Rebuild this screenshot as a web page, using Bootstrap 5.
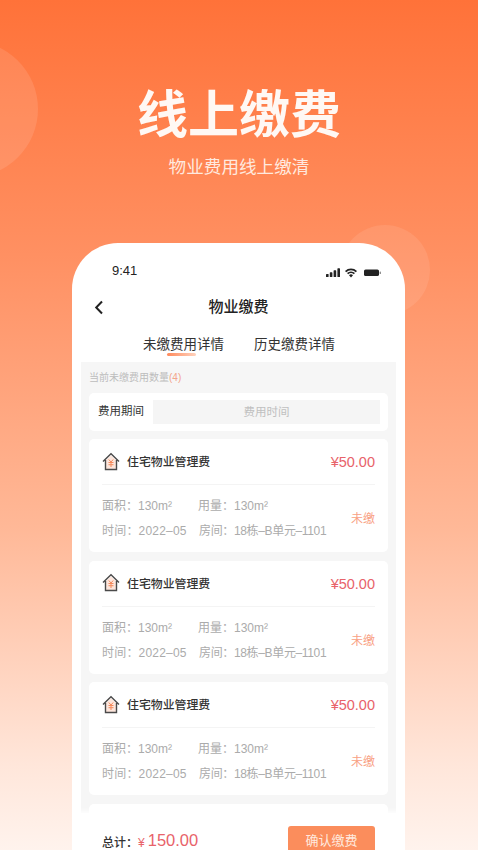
<!DOCTYPE html>
<html lang="zh-CN">
<head>
<meta charset="utf-8">
<title>线上缴费</title>
<link href="https://cdn.jsdelivr.net/npm/bootstrap@5.3.0/dist/css/bootstrap.min.css" rel="stylesheet">
<style>
html,body{margin:0;height:850px;overflow:hidden}
body{font-family:"Liberation Sans","Noto Sans CJK SC",sans-serif;background:#fff}
.stage{position:relative;height:850px;overflow:hidden;background:linear-gradient(180deg,#ff7239 0%,#ff9062 30%,#ffb897 62%,#ffe6da 90%,#fff3ed 100%);padding-top:85px}
.blob-l{position:absolute;left:-102px;top:40px;width:140px;height:138px;border-radius:50%;background:rgba(255,255,255,.11)}
.blob-r{position:absolute;left:340px;top:225px;width:90px;height:90px;border-radius:50%;background:rgba(255,255,255,.09)}
.hero-title{font-size:51px;line-height:62px;font-weight:700;color:#fff8f4;margin:0;position:relative}
.hero-sub{font-size:17.6px;line-height:24px;color:#ffe9df;margin:8px 0 0;position:relative}
.phone{position:relative;width:333px;height:607px;margin:64px 0 0 72px;background:#fff;border-radius:46px 46px 0 0;overflow:hidden}
.status{padding:20px 24px 0 40px;height:40px;color:#222}
.status-time{font-size:13px;line-height:16px;font-weight:500}
.topbar{position:relative;height:48px;padding-top:1px;font-size:15px;font-weight:500;color:#222}
.back-btn{position:absolute;left:22px;top:17px;display:block}
.tabs-row{height:31px;gap:30px;padding:4px 0 0 1px;font-size:13.5px;line-height:20px;color:#333}
.tab-on{position:relative}
.tab-on::after{content:"";position:absolute;left:24px;bottom:-1px;width:29px;height:3px;border-radius:2px;background:linear-gradient(90deg,#ff8a5c,#ffd2bd)}
.sheet{margin:0 9px;background:#f6f6f6;padding:0 8px;height:500px}
.count-line{font-size:10px;line-height:14px;color:#bdbdbd;padding:9px 0 8px 0}
.count-line em{font-style:normal;color:#f3a58c}
.panel{background:#fff;border-radius:5px}
.filter{height:38px;padding:0 8px 0 9px;margin-bottom:8px;gap:9px}
.filter-label{font-size:11.5px;color:#333;white-space:nowrap}
.filter-field{flex:1;height:24px;line-height:24px;background:#f5f5f5;text-align:center;font-size:11.5px;color:#c0c0c0}
.fee{height:113px;margin-bottom:8.5px;padding:0 13px}
.fee-head{height:46px;padding-top:3px;border-bottom:1px solid #f4f4f4;gap:7px}
.fee-icon{margin-top:-4px}
.fee-name{font-size:11.9px;color:#333;font-weight:500}
.fee-price{margin-left:auto;font-size:14.5px;color:#e8636a}
.fee-body{color:#ababab;font-size:12px;line-height:25px;padding-top:9px}
.meta-a{width:96px;white-space:nowrap}
.meta-b{width:97px;white-space:nowrap;letter-spacing:.2px}
.meta-room{white-space:nowrap;letter-spacing:-.35px}
.fee-state{margin-left:auto;font-size:12px;color:#f9a184;padding-top:1px}
.paybar{position:absolute;left:0;right:0;bottom:0;height:37px;background:#fff;padding:0 30px;box-shadow:0 -2px 5px rgba(255,255,255,.9)}
.sum-label{font-size:12px;line-height:14px;color:#333;padding-top:23px;font-weight:500}
.sum-cny{font-size:12px;line-height:14px;color:#e8636a;margin:23px 3px 0 0}
.sum-val{font-size:16.5px;color:#e8636a;line-height:20px;padding-top:17px}
.confirm{margin-left:auto;margin-top:13px;width:87px;height:30px;line-height:30px;padding:0;border:0;border-radius:3px;background:#fb8d5c;color:#ffe9df;font-size:13px;text-align:center}
</style>
</head>
<body>
<div class="stage">
  <div class="blob-l"></div>
  <div class="blob-r"></div>
  <h1 class="hero-title text-center">线上缴费</h1>
  <p class="hero-sub text-center">物业费用线上缴清</p>

  <div class="phone">
    <div class="status d-flex justify-content-between align-items-start">
      <span class="status-time">9:41</span>
      <svg width="55" height="12" viewBox="0 0 55 12" class="mt-1" aria-hidden="true">
        <g fill="#222">
          <rect x="0" y="7" width="2.6" height="3" rx=".6"/><rect x="3.8" y="5.3" width="2.6" height="4.700" rx=".6"/><rect x="7.6" y="3.3" width="2.6" height="6.700" rx=".6"/><rect x="11.4" y="1.3" width="2.6" height="8.700" rx=".6"/>
          <path d="M25 10.500l-2-2.300a3 3 0 0 1 4 0z"/>
          <path d="M22.200 7.300 21 6a6 6 0 0 1 8 0l-1.200 1.300a4.200 4.200 0 0 0-5.600 0z"/>
          <path d="M20.200 5.200 19 3.900a9 9 0 0 1 12 0l-1.200 1.300a7.200 7.200 0 0 0-9.600 0z"/>
          <rect x="38" y="2.500" width="15" height="6.500" rx="1.600"/><rect x="53.600" y="4.500" width="1.400" height="2.600" rx=".6" opacity=".5"/>
        </g>
      </svg>
    </div>
    <div class="topbar d-flex align-items-center justify-content-center">
      <svg class="back-btn" width="10" height="15" viewBox="0 0 10 15" aria-hidden="true"><path d="M8 1.500 2.200 7.500 8 13.500" fill="none" stroke="#222" stroke-width="2"/></svg>
      <span>物业缴费</span>
    </div>
    <div class="tabs-row d-flex justify-content-center align-items-start">
      <span class="tab-on">未缴费用详情</span>
      <span>历史缴费详情</span>
    </div>
    <div class="sheet">
      <div class="count-line">当前未缴费用数量<em>(4)</em></div>
      <div class="panel filter d-flex align-items-center">
        <span class="filter-label">费用期间</span>
        <div class="filter-field">费用时间</div>
      </div>

      <div class="panel fee">
        <div class="fee-head d-flex align-items-center">
          <svg class="fee-icon" width="18" height="19" viewBox="0 0 18 19" aria-hidden="true"><path d="M3.5 8.5 9 3.5l5.500 5v8.500h-11z" fill="#fde6dc"/><path d="M1 9.500 9 1.800l8 7.700M3.500 8v9.500h11V8" fill="none" stroke="#4a4a4a" stroke-width="1.400"/><path d="M6.800 7.500 9 10l2.200-2.500M6.500 10.500h5M6.500 12.700h5M9 10v5" fill="none" stroke="#f58a5c" stroke-width="1"/></svg>
          <span class="fee-name">住宅物业管理费</span>
          <span class="fee-price">¥50.00</span>
        </div>
        <div class="fee-body d-flex align-items-center">
          <div>
            <div class="d-flex"><span class="meta-a">面积：130m²</span><span>用量：130m²</span></div>
            <div class="d-flex"><span class="meta-b">时间：2022–05</span><span class="meta-room">房间：18栋–B单元–1101</span></div>
          </div>
          <span class="fee-state">未缴</span>
        </div>
      </div>

      <div class="panel fee">
        <div class="fee-head d-flex align-items-center">
          <svg class="fee-icon" width="18" height="19" viewBox="0 0 18 19" aria-hidden="true"><path d="M3.5 8.5 9 3.5l5.500 5v8.500h-11z" fill="#fde6dc"/><path d="M1 9.500 9 1.800l8 7.700M3.500 8v9.500h11V8" fill="none" stroke="#4a4a4a" stroke-width="1.400"/><path d="M6.800 7.500 9 10l2.200-2.500M6.500 10.500h5M6.500 12.700h5M9 10v5" fill="none" stroke="#f58a5c" stroke-width="1"/></svg>
          <span class="fee-name">住宅物业管理费</span>
          <span class="fee-price">¥50.00</span>
        </div>
        <div class="fee-body d-flex align-items-center">
          <div>
            <div class="d-flex"><span class="meta-a">面积：130m²</span><span>用量：130m²</span></div>
            <div class="d-flex"><span class="meta-b">时间：2022–05</span><span class="meta-room">房间：18栋–B单元–1101</span></div>
          </div>
          <span class="fee-state">未缴</span>
        </div>
      </div>

      <div class="panel fee">
        <div class="fee-head d-flex align-items-center">
          <svg class="fee-icon" width="18" height="19" viewBox="0 0 18 19" aria-hidden="true"><path d="M3.5 8.5 9 3.5l5.500 5v8.500h-11z" fill="#fde6dc"/><path d="M1 9.500 9 1.800l8 7.700M3.500 8v9.500h11V8" fill="none" stroke="#4a4a4a" stroke-width="1.400"/><path d="M6.800 7.500 9 10l2.200-2.500M6.500 10.500h5M6.500 12.700h5M9 10v5" fill="none" stroke="#f58a5c" stroke-width="1"/></svg>
          <span class="fee-name">住宅物业管理费</span>
          <span class="fee-price">¥50.00</span>
        </div>
        <div class="fee-body d-flex align-items-center">
          <div>
            <div class="d-flex"><span class="meta-a">面积：130m²</span><span>用量：130m²</span></div>
            <div class="d-flex"><span class="meta-b">时间：2022–05</span><span class="meta-room">房间：18栋–B单元–1101</span></div>
          </div>
          <span class="fee-state">未缴</span>
        </div>
      </div>

      <div class="panel fee"></div>
    </div>
    <div class="paybar d-flex align-items-start">
      <span class="sum-label">总计：</span>
      <span class="sum-cny">¥</span>
      <span class="sum-val">150.00</span>
      <button type="button" class="btn confirm">确认缴费</button>
    </div>
  </div>
</div>
<script src="https://cdn.jsdelivr.net/npm/bootstrap@5.3.0/dist/js/bootstrap.bundle.min.js"></script>
</body>
</html>
